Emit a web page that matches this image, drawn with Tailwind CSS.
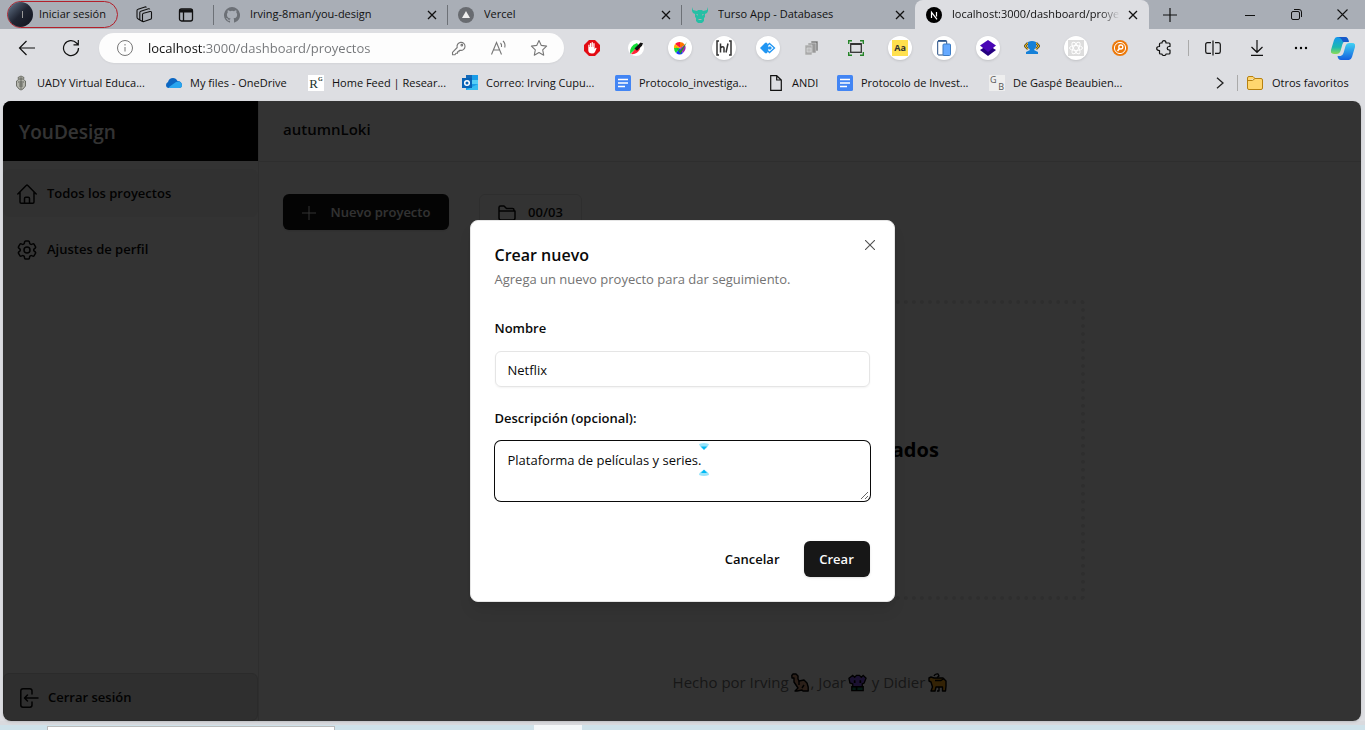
<!DOCTYPE html>
<html lang="es">
<head>
<meta charset="utf-8">
<meta name="viewport" content="width=device-width, initial-scale=1">
<title>YouDesign - Proyectos</title>
<script src="https://cdn.jsdelivr.net/npm/@tailwindcss/browser@4"></script>
</head>
<body class="flex h-screen flex-col overflow-hidden bg-[#dddee2] font-['Open_Sans','Noto_Sans',sans-serif] text-[11px] text-[#111]">

<!-- Tab strip -->
<header class="flex h-[29px] shrink-0 items-center bg-[#a9aeb6]">
  <button class="ml-[7px] flex h-[27px] w-[111px] shrink-0 items-center gap-[6px] rounded-full border border-[#b3202b] whitespace-nowrap">
    <span class="flex size-[25px] shrink-0 items-center justify-center rounded-full bg-linear-to-br from-[#6c7d92] via-[#202532] to-[#10131d]"><span class="ml-1 h-[7px] w-px bg-[#999]"></span></span>Iniciar sesión
  </button>
  <button class="ml-[17px] shrink-0" aria-label="Espacios de trabajo"><svg width="18" height="18" viewBox="0 0 18 18" fill="none" stroke="#111" stroke-width="1.100" stroke-linejoin="round"><path d="M8.500 7.200 15 5.500q1.500-.3 1.500 1V12q0 1-1 1.300l-6.500 2.200q-1.500.4-1.500-1V8.500q0-1 1-1.300M4.800 13.500V6.500q0-1 1-1.300L13.500 2.800q1-.2 1.300.6M2 11.500V4.500q0-1 1-1.300L10 .9q1-.2 1.400.5M2 11q0 1.500 1.200 2l4.300 2.500"/></svg></button>
  <button class="ml-6 shrink-0" aria-label="Pestañas verticales"><svg width="18" height="18" viewBox="0 0 18 18" fill="none" stroke="#111" stroke-width="1.300"><rect x="2.500" y="3" width="13" height="12" rx="2"/><path d="M2.500 5h13" stroke-width="3"/><path d="M6.500 6v9"/></svg></button>
  <nav class="ml-[18px] flex min-w-0 flex-1 self-stretch" aria-label="Pestañas">
    <div class="flex max-w-[234px] flex-1 items-center">
      <span class="h-5 w-px bg-[#6d7177]"></span>
      <svg class="ml-[10px] shrink-0" width="16" height="16" viewBox="0 0 16 16" fill="#6c7076"><path d="M8 0a8 8 0 0 0-2.530 15.590c.4.070.55-.17.55-.38v-1.490c-2.010.37-2.530-.49-2.690-.94-.09-.23-.48-.94-.82-1.130-.28-.15-.68-.52-.01-.53.630-.01 1.080.58 1.230.82.720 1.210 1.870.87 2.330.66.070-.52.280-.87.510-1.070-1.780-.2-3.640-.89-3.640-3.950 0-.87.310-1.590.82-2.150-.08-.2-.36-1.020.08-2.120 0 0 .67-.21 2.200.82a7.400 7.400 0 0 1 4 0c1.530-1.040 2.200-.82 2.200-.82.440 1.100.160 1.920.08 2.120.510.560.82 1.270.82 2.150 0 3.070-1.870 3.750-3.650 3.950.290.250.540.730.540 1.480v2.200c0 .21.150.46.55.38A8 8 0 0 0 8 0"/></svg>
      <a href="#" class="ml-[10px] flex-1 truncate">Irving-8man/you-design</a>
      <button class="mr-[10px]" aria-label="Cerrar pestaña"><svg width="10" height="10" viewBox="0 0 10 10" stroke="#111" stroke-width="1.300"><path d="M1 1l8 8M9 1 1 9"/></svg></button>
    </div>
    <div class="flex max-w-[234px] flex-1 items-center">
      <span class="h-5 w-px bg-[#6d7177]"></span>
      <svg class="ml-[10px] shrink-0" width="16" height="16" viewBox="0 0 16 16"><circle cx="8" cy="8" r="8" fill="#686b70"/><path d="M8 4l4 7H4z" fill="#eee"/></svg>
      <a href="#" class="ml-[10px] flex-1 truncate">Vercel</a>
      <button class="mr-[10px]" aria-label="Cerrar pestaña"><svg width="10" height="10" viewBox="0 0 10 10" stroke="#111" stroke-width="1.300"><path d="M1 1l8 8M9 1 1 9"/></svg></button>
    </div>
    <div class="flex max-w-[234px] flex-1 items-center">
      <span class="h-5 w-px bg-[#6d7177]"></span>
      <svg class="ml-[10px] shrink-0" width="16" height="16" viewBox="0 0 16 16" fill="#24bfa5"><path d="M0 0l1 3 4 1 1-1h4l1 1 4-1 1-3v4l-1 2-2 1v3l-1 1v3l-2 2H6l-2-2v-3l-1-1V7L1 6 0 4z"/><path d="M4.500 7.500l1.500.5M11.500 7.500 10 8M6.500 12.500h3" stroke="#a9aeb6"/></svg>
      <a href="#" class="ml-[10px] flex-1 truncate">Turso App - Databases</a>
      <button class="mr-[10px]" aria-label="Cerrar pestaña"><svg width="10" height="10" viewBox="0 0 10 10" stroke="#111" stroke-width="1.300"><path d="M1 1l8 8M9 1 1 9"/></svg></button>
    </div>
    <div class="flex max-w-[234px] flex-1 items-center rounded-t-lg bg-[#dddee2]">
      <svg class="ml-[11px] shrink-0" width="16" height="16" viewBox="0 0 16 16"><circle cx="8" cy="8" r="8" fill="#000"/><path d="M5.500 11V5.300l5.500 7M10.500 5v4.500" fill="none" stroke="#fff" stroke-width="1.200"/></svg>
      <a href="#" class="ml-[10px] w-[168px] whitespace-nowrap mask-r-from-88%">localhost:3000/dashboard/proye</a>
      <button class="mr-[11px] ml-[8px]" aria-label="Cerrar pestaña"><svg width="10" height="10" viewBox="0 0 10 10" stroke="#111" stroke-width="1.300"><path d="M1 1l8 8M9 1 1 9"/></svg></button>
    </div>
    <button class="ml-[14px]" aria-label="Nueva pestaña"><svg width="14" height="14" viewBox="0 0 14 14" stroke="#111" stroke-width="1.200"><path d="M7 0v14M0 7h14"/></svg></button>
  </nav>
  <button class="flex w-[46px] justify-center" aria-label="Minimizar"><svg width="10" height="10" viewBox="0 0 10 10" stroke="#111"><path d="M0 5.500h10"/></svg></button>
  <button class="flex w-[46px] justify-center" aria-label="Restaurar"><svg width="11" height="11" viewBox="0 0 11 11" fill="none" stroke="#111"><rect x=".5" y="2.500" width="8" height="8" rx="1.500"/><path d="M3 .5h5q2.500 0 2.500 2.500v5"/></svg></button>
  <button class="flex w-[46px] justify-center" aria-label="Cerrar ventana"><svg width="11" height="11" viewBox="0 0 11 11" stroke="#111" stroke-width="1.100"><path d="M.5.5l10 10M10.500.5l-10 10"/></svg></button>
</header>

<!-- Address bar -->
<div class="flex h-[38px] shrink-0 items-center pl-[5px]">
  <button class="flex w-11 justify-center" aria-label="Atrás"><svg width="18" height="16" viewBox="0 0 18 16" fill="none" stroke="#111" stroke-width="1.200"><path d="M17 8H1.500M8.500 1l-7 7 7 7"/></svg></button>
  <button class="flex w-11 justify-center" aria-label="Actualizar"><svg width="18" height="18" viewBox="0 0 18 18" fill="none" stroke="#111" stroke-width="1.200"><path d="M16.500 9A7.500 7.500 0 1 1 14.500 4L16 5.500M16.300 1v4.800h-4.800"/></svg></button>
  <div class="mx-[6px] flex h-[30px] min-w-0 flex-1 items-center rounded-full bg-[#fdfdfd] pr-[16px] pl-[17px] shadow-xs">
    <svg class="shrink-0" width="18" height="18" viewBox="0 0 18 18" fill="none" stroke="#777"><circle cx="9" cy="9" r="7.500"/><path d="M9 8v4.500M9 5v1.500"/></svg>
    <label for="url" class="sr-only">Dirección</label>
    <input id="url" type="text" value="localhost:3000/dashboard/proyectos" class="ml-[14px] h-6 min-w-0 flex-1 bg-linear-to-r from-[#111] from-[56px] to-[#737578] to-[56px] bg-clip-text text-[13px] text-transparent outline-none">
    <svg class="mr-6 shrink-0" width="15" height="15" viewBox="0 0 15 15" fill="none" stroke="#777" stroke-width="1.100" stroke-linejoin="round"><path d="M6.200 6.500A4 4 0 1 1 9 9.200L8 9.500v1.300H6.500v1.500H5l-1 1.500H1.500v-2.500z"/><circle cx="10.800" cy="4.200" r=".8"/></svg>
    <svg class="mr-[22px] shrink-0" width="18" height="16" viewBox="0 0 18 16" fill="none" stroke="#777" stroke-width="1.100"><path d="M1.500 14.500 6.500 2.500l5 12M3.500 10h6M10.500 3q1.500 1.500 1 4M13 1q2.800 2.500 1.700 6.500"/></svg>
    <svg class="shrink-0" width="18" height="18" viewBox="0 0 18 18" fill="none" stroke="#777" stroke-width="1.100" stroke-linejoin="round"><path d="M9 1.500l2.300 4.900 5.300.7-3.900 3.700 1 5.400L9 13.600l-4.700 2.600 1-5.400L1.400 7.100l5.300-.7z"/></svg>
  </div>
  <nav class="flex shrink-0 items-center" aria-label="Extensiones">
    <button class="flex w-11 justify-center" aria-label="Bloqueador"><svg width="16" height="16" viewBox="0 0 16 16"><path d="M5 0h6l5 5v6l-5 5H5l-5-5V5z" fill="#e30b13"/><path d="M4.300 8V5q.7-.8 1.200 0v2h.4V3.300q.7-.8 1.300 0V7h.4V2.500q.7-.8 1.300 0V7h.4V3.500q.7-.8 1.300 0V9l1-1.300q1-.2 1 .5L11 12q-.8 1.500-3 1.500-3.500 0-3.700-3z" fill="#fff"/></svg></button>
    <button class="flex w-11 justify-center" aria-label="Cuentagotas"><svg width="16" height="16" viewBox="0 0 16 16"><circle cx="8" cy="8" r="8" fill="#fff"/><path d="M2 14Q1 6 9 3l2 3z" fill="#16df38"/><path d="M3 14l5-6 3-3 1 4q-3 6-9 5z" fill="#ff2436"/><path d="M6.500 8.500l4-4 2-2 2.500.8-1 2.500-5 5z" fill="#111"/></svg></button>
    <button class="mx-[10px] flex size-6 items-center justify-center rounded-full bg-white shadow" aria-label="Selector de color"><svg width="14" height="14" viewBox="0 0 14 14"><path d="M7 7V1a6 6 0 0 1 5 3z" fill="#ff7300"/><path d="M7 7V1a6 6 0 0 0-5 2z" fill="#ff173b"/><path d="M7 7 2 3a6 6 0 0 0-1 4z" fill="#ffb000"/><path d="M7 7H1q0 3 2 5z" fill="#18df38"/><path d="M7 7l-4 5q4 3 7 0z" fill="#1538ff"/><path d="M7 7l5-3q2 4-2 8z" fill="#a029b5"/><path d="M3 6l4 4 7-9-6.500 12z" fill="#249b21"/></svg></button>
    <button class="mx-[10px] flex size-6 items-center justify-center rounded-full bg-white shadow" aria-label="Hypothesis"><svg width="16" height="16" viewBox="0 0 16 16" fill="none" stroke="#333" stroke-width="1.500"><path d="M3 1H1v14h2M13 1h2v14h-2M4.500 3.500v9M4.500 8q3-2.500 3.500 0v4.500M12 3.500l-2 9"/></svg></button>
    <button class="mx-[10px] flex size-6 items-center justify-center rounded-full bg-white shadow" aria-label="Navegación"><svg width="16" height="12" viewBox="0 0 16 12" fill="#2196f3"><path d="M0 6l5-5q1-.8 2 0l1 1.500L5 6l3 3.500L7 11q-1 .8-2 0z"/><path d="M9.500 1.500 14.500 6l-5 4.500L5 6z" fill="#fff" stroke="#2196f3" stroke-width="1.300"/><path d="M3 6l4-3 1.500 1.500v3L7 9zM10 4l2 2-2 2-2-2z"/></svg></button>
    <button class="flex w-11 justify-center" aria-label="Copias"><svg width="16" height="16" viewBox="0 0 16 16" stroke="#dedfe1" stroke-width=".6"><path d="M7 1h7v10H7z" fill="#777"/><path d="M4 3h8v10H4z" fill="#999"/><path d="M1 5h7v10H1z" fill="#aaa"/><path d="M3 8h4v4H3z" fill="#bbb"/></svg></button>
    <button class="flex w-11 justify-center" aria-label="Captura"><svg width="16" height="16" viewBox="0 0 16 16" fill="none"><path d="M.7 4V.7H4M12 .7h3.300V4M15.300 12v3.300H12M4 15.300H.7V12" stroke="#268529" stroke-width="1.400"/><rect x="2.700" y="3.700" width="10.600" height="8.600" stroke="#333" stroke-width="1.300"/><path d="M3 4h10" stroke="#333" stroke-width="2"/></svg></button>
    <button class="mx-[10px] flex size-6 items-center justify-center rounded-full bg-white shadow" aria-label="Tipografía"><span class="flex size-4 items-center justify-center bg-[#ffe04e] text-[9px] font-bold text-[#333]">Aa</span></button>
    <button class="mx-[10px] flex size-6 items-center justify-center rounded-full bg-white shadow" aria-label="Vista móvil"><svg width="14" height="16" viewBox="0 0 14 16"><rect x=".7" y=".7" width="9" height="14.300" rx="1" fill="#fff" stroke="#234c83"/><path d="M1 1h8.500" stroke="#234c83" stroke-width="1.500"/><rect x="6" y="4" width="7.500" height="11.500" rx="1" fill="#65a9ff" stroke="#3c7bc3"/></svg></button>
    <button class="mx-[10px] flex size-6 items-center justify-center rounded-full bg-white shadow" aria-label="Capas"><svg width="16" height="16" viewBox="0 0 16 16"><path d="M0 10l8-5 8 5-8 6z" fill="#250080"/><path d="M0 5.500 8 0l8 5.500L8 12z" fill="#4906b6"/></svg></button>
    <button class="flex w-11 justify-center" aria-label="Usuario"><svg width="16" height="14" viewBox="0 0 16 14"><path d="M4 2 1 5l3 3M12 2l3 3-3 3" stroke="#655b35" fill="none" stroke-width="2.500"/><path d="M4 2 1 5l3 3M12 2l3 3-3 3" stroke="#f0b70a" fill="none"/><path d="M4 1q4-2 8 0v5l-2 3 4 2v2H2v-2l4-2-2-3z" fill="#1580d8"/></svg></button>
    <button class="mx-[10px] flex size-6 items-center justify-center rounded-full bg-white shadow" aria-label="React"><svg width="16" height="16" viewBox="0 0 16 16" fill="none" stroke="#fff"><path d="M0 0h16v16H0z" fill="#ddd" stroke="none"/><ellipse cx="8" cy="8" rx="6.500" ry="2.500"/><ellipse cx="8" cy="8" rx="6.500" ry="2.500" transform="rotate(60 8 8)"/><ellipse cx="8" cy="8" rx="6.500" ry="2.500" transform="rotate(120 8 8)"/></svg></button>
    <button class="flex w-11 justify-center" aria-label="Buscar"><svg width="16" height="16" viewBox="0 0 16 16" fill="none"><circle cx="8" cy="8" r="8" fill="#ec790b"/><g stroke="#fff"><circle cx="8" cy="8" r="5.600"/><circle cx="8.800" cy="7" r="2" stroke-width="1.300"/><path d="M7.500 8.500l-2 2.500" stroke-width="1.500"/></g></svg></button>
    <button class="flex w-11 justify-center" aria-label="Extensiones"><svg width="16" height="16" viewBox="0 0 16 16" fill="none" stroke="#111" stroke-width="1.200" stroke-linejoin="round"><path d="M4.500 3H6Q6 .7 8 .7T10 3h3q1 0 1 1v2.500h-1q-1.800.2-1.800 1.800t1.800 1.700h1V13q0 1-1 1h-3q0 1.500-2 1.500T6 14H4.500q-1 0-1-1v-2.500Q.7 10.500.7 8.500t2.800-2V4q0-1 1-1z"/></svg></button>
    <span class="mx-[2px] h-4 w-px bg-[#aaa]"></span>
    <button class="flex w-[43px] justify-center" aria-label="Pantalla dividida"><svg width="16" height="16" viewBox="0 0 16 16" fill="none" stroke="#111" stroke-width="1.200"><path d="M6 2.600H2.500Q.7 2.600.7 4.500v7q0 1.900 1.800 1.900H6M10 2.600h3.500q1.800 0 1.800 1.900v7q0 1.900-1.800 1.900H10M8 .5v15"/></svg></button>
    <button class="flex w-[46px] justify-center" aria-label="Descargas"><svg width="14" height="16" viewBox="0 0 14 16" fill="none" stroke="#111" stroke-width="1.200"><path d="M7 0v12M1.500 7 7 12.300 12.500 7M1 15.300h12"/></svg></button>
    <button class="flex w-[42px] justify-center" aria-label="Más"><svg width="14" height="4" viewBox="0 0 14 4"><circle cx="2" cy="2" r="1.200"/><circle cx="7" cy="2" r="1.200"/><circle cx="12" cy="2" r="1.200"/></svg></button>
    <button class="flex w-[43px] justify-center pr-[2px]" aria-label="Copilot"><svg width="24" height="23" viewBox="0 0 24 23"><defs><linearGradient id="ca" x2="0" y2="1"><stop stop-color="#1697ef"/><stop offset=".6" stop-color="#1bb8b0"/><stop offset="1" stop-color="#8bdc57"/></linearGradient><linearGradient id="cb" x2="0" y2="1"><stop stop-color="#40d2f3"/><stop offset="1" stop-color="#1460df"/></linearGradient></defs><path d="M6 0h8q3 0 3.500 4h-3q-2 0-3 3l-2 7q-1 3-4 3H3q-4 0-3-4L3 3q1-3 3-3" fill="url(#ca)"/><path d="M18 23h-8q-3 0-3.500-4h3q2 0 3-3l2-7q1-3 4-3H21q4 0 3 4l-3 10q-1 3-3 3" fill="url(#cb)"/><path d="M6 0h8q3 0 4 5h-6Q10 0 6 0" fill="#1859c9"/></svg></button>
  </nav>
</div>

<!-- Bookmarks -->
<nav class="flex h-[34px] shrink-0 items-center gap-4 pr-[14px] pb-[2px] pl-[13px] whitespace-nowrap" aria-label="Favoritos">
  <a href="#" class="flex items-center gap-2"><svg width="16" height="16" viewBox="0 0 16 16" fill="#b4b5ac" stroke="#575950" stroke-width=".8"><path d="M8 1l3 1.500-.5 2L12.500 6v5l-2.500 3-2 1-2-1-2.500-3V6l2-1.500-.5-2z"/><path d="M6 4h4M8 2v12M5 7h6M6 11h4M6 9h4"/></svg><span class="w-[113px]">UADY Virtual Educa...</span></a>
  <a href="#" class="flex items-center gap-2"><svg width="16" height="12" viewBox="0 0 16 12"><path d="M2 5Q3 1 7 1q3 0 4.500 3 4 0 4.500 4 0 3-3 3H3Q0 11 0 8q0-2 2-3" fill="#0b66c2"/><path d="M3 10l7-5q5-2 6 3 0 3-3 3H3z" fill="#27a5ef"/></svg><span class="w-[102px]">My files - OneDrive</span></a>
  <a href="#" class="flex items-center gap-2"><span class="flex size-4 justify-center bg-white font-['Liberation_Serif',serif] text-[13px] leading-[18px] text-[#24332d]">R<sup class="top-0 text-[6px] leading-[8px] font-bold">G</sup></span><span class="w-[114px]">Home Feed | Resear...</span></a>
  <a href="#" class="flex items-center gap-2"><svg width="16" height="16" viewBox="0 0 16 16"><path d="M4 0h12v15H4z" fill="#1a9de8"/><path d="M4 0h6v5H4z" fill="#1369b8"/><path d="M10 5h6v4h-6z" fill="#55cff6"/><path d="M4 15l12-6v6z" fill="#36bdf1"/><path d="M0 3h10v10H0z" fill="#0863b6"/><circle cx="5" cy="8" r="2.300" fill="none" stroke="#fff" stroke-width="1.500"/></svg><span class="w-[113px]">Correo: Irving Cupu...</span></a>
  <a href="#" class="flex items-center gap-2"><svg width="16" height="16" viewBox="0 0 16 16"><rect width="16" height="16" rx="1.500" fill="#4285f4"/><path d="M3 4.500h10M3 8h10M3 11.500h7" stroke="#fff" stroke-width="1.500"/></svg><span class="w-[113px]">Protocolo_investiga...</span></a>
  <a href="#" class="flex items-center gap-2"><svg width="16" height="16" viewBox="0 0 16 16" fill="none" stroke="#111" stroke-width="1.200"><path d="M2.700.7h6L13.300 5v10.300H2.700zM8.700.7V5h4.600"/></svg><span class="w-[29px]">ANDI</span></a>
  <a href="#" class="flex items-center gap-2"><svg width="16" height="16" viewBox="0 0 16 16"><rect width="16" height="16" rx="1.500" fill="#4285f4"/><path d="M3 4.500h10M3 8h10M3 11.500h7" stroke="#fff" stroke-width="1.500"/></svg><span class="w-[112px]">Protocolo de Invest...</span></a>
  <a href="#" class="flex items-center gap-2"><span class="flex size-4 justify-between bg-[#eee] px-px text-[9px] leading-[9px] text-[#555]"><span>G</span><span class="self-end">B</span></span><span>De Gaspé Beaubien...</span></a>
  <button class="ml-auto" aria-label="Más favoritos"><svg width="8" height="12" viewBox="0 0 8 12" fill="none" stroke="#222" stroke-width="1.300"><path d="M1 .7 7 6l-6 5.300"/></svg></button>
  <a href="#" class="-ml-[3px] flex items-center gap-2"><span class="h-4 w-px bg-[#aaa]"></span><svg width="18" height="16" viewBox="0 0 18 16" fill="#ffd66e" stroke="#b78110"><path d="M1.500 3q0-1.500 1.500-1.500h4L9 3.500h6q1.500 0 1.500 1.500v8q0 1.500-1.500 1.500H3q-1.500 0-1.500-1.500zM1.500 5.500h5l2.500-2"/></svg><span class="w-[79px]">Otros favoritos</span></a>
</nav>

<!-- Application viewport -->
<div class="relative mr-1 ml-[3px] flex min-h-0 flex-1 overflow-hidden rounded-lg bg-white text-[13px] shadow">
  <aside class="flex w-64 shrink-0 flex-col border-r border-neutral-200 font-semibold text-neutral-950">
    <h1 class="flex h-[60px] items-center bg-black px-4 pt-[2px] text-[19px] text-white">YouDesign</h1>
    <nav class="mt-2 flex flex-1 flex-col gap-2">
      <a href="#" class="flex h-12 items-center gap-[10px] rounded-md bg-neutral-100 px-[14px] pt-px"><svg width="20" height="20" viewBox="0 0 20 20" fill="none" stroke="currentColor" stroke-width="1.500" stroke-linecap="round" stroke-linejoin="round"><path d="M.8 10 9.200 1.500q.8-.7 1.600 0L19.200 10M3 8v10q0 1.200 1.200 1.200h11.600q1.200 0 1.200-1.200V8M7.500 19v-4.500q0-1.200 1.200-1.200h2.600q1.200 0 1.200 1.200V19"/></svg>Todos los proyectos</a>
      <a href="#" class="flex h-12 items-center gap-[10px] rounded-md px-[14px] pt-px"><svg width="20" height="20" viewBox="2 2 20 20" fill="none" stroke="currentColor" stroke-width="1.500" stroke-linecap="round" stroke-linejoin="round"><path d="M9.594 3.940c.09-.542.560-.940 1.110-.940h2.593c.55 0 1.020.398 1.110.940l.213 1.281c.063.374.313.686.645.870.074.040.147.083.220.127.325.196.720.257 1.075.124l1.217-.456a1.125 1.125 0 0 1 1.370.490l1.296 2.247a1.125 1.125 0 0 1-.26 1.431l-1.003.827c-.293.241-.438.613-.430.992a7.723 7.723 0 0 1 0 .255c-.008.378.137.750.430.991l1.004.827c.424.350.534.955.260 1.430l-1.298 2.247a1.125 1.125 0 0 1-1.369.491l-1.217-.456c-.355-.133-.750-.072-1.076.124a6.470 6.470 0 0 1-.220.128c-.331.183-.581.495-.644.869l-.213 1.281c-.090.543-.560.940-1.110.940h-2.594c-.550 0-1.019-.398-1.110-.940l-.213-1.281c-.062-.374-.312-.686-.644-.870a6.520 6.520 0 0 1-.220-.127c-.325-.196-.720-.257-1.076-.124l-1.217.456a1.125 1.125 0 0 1-1.369-.490l-1.297-2.247a1.125 1.125 0 0 1 .260-1.431l1.004-.827c.292-.240.437-.613.430-.991a6.932 6.932 0 0 1 0-.255c.007-.380-.138-.751-.430-.992l-1.004-.827a1.125 1.125 0 0 1-.260-1.430l1.297-2.247a1.125 1.125 0 0 1 1.370-.491l1.216.456c.356.133.751.072 1.076-.124.072-.044.146-.086.220-.128.332-.183.582-.495.644-.869z"/><circle cx="12" cy="12" r="3"/></svg>Ajustes de perfil</a>
    </nav>
    <button class="flex h-12 items-center gap-[9px] rounded-md border border-neutral-300 bg-[#e8e8e8] px-4 pt-px"><svg width="19" height="20" viewBox="0 0 19 20" fill="none" stroke="currentColor" stroke-width="1.500" stroke-linecap="round" stroke-linejoin="round"><path d="M12 6V3q0-2.200-2.200-2.200H3Q.8.800.8 3v14q0 2.200 2.200 2.200h6.800Q12 19.200 12 17v-3M7.500 7l-3 3 3 3M5 10h13"/></svg>Cerrar sesión</button>
  </aside>

  <main class="flex min-w-0 flex-1 flex-col">
    <div class="flex h-[61px] items-center border-b border-neutral-200 px-6 pb-1 text-[15px] font-semibold">autumnLoki</div>
    <div class="flex flex-1 flex-col px-6 pt-8">
      <div class="flex items-center gap-[30px] font-semibold">
        <button class="flex h-9 w-[166px] items-center justify-center gap-[15px] rounded-md bg-neutral-900 pt-px text-neutral-50 shadow"><svg width="14" height="14" viewBox="0 0 14 14" stroke="currentColor"><path d="M7 0v14M0 7h14"/></svg>Nuevo proyecto</button>
        <div class="flex h-9 w-[103px] items-center justify-center gap-3 rounded-md border border-neutral-200 pt-px"><svg width="18" height="16" viewBox="0 0 18 16" fill="none" stroke="#0a0a0a" stroke-width="1.500" stroke-linejoin="round"><path d="M1 6V2.500Q1 1 2.500 1H6l2.500 2.500h6Q16 3.500 16 5v1M1 6h16v7q0 2-2 2H3q-2 0-2-2z"/></svg>00/03</div>
      </div>
      <section class="mx-auto mt-[70px] flex h-[300px] w-full max-w-[550px] items-center justify-center rounded-sm border-4 border-dotted border-neutral-200">
        <h2 class="text-[20px] font-bold text-black">No hay proyectos creados</h2>
      </section>
      <footer class="mt-auto flex h-[77px] items-center justify-center text-[15px] font-normal whitespace-pre text-neutral-500">Hecho por Irving<svg class="mr-[2px] ml-[2px]" width="18" height="19" viewBox="0 0 18 19" fill="#d49c79" stroke="#000" stroke-width="1.400" stroke-linejoin="round"><path d="M.8 2.500 2 1h3l2 2v3l1 2 5-1 3 3 1.200 4v4H12l-1-1-5 1H4l3-3-2-3-2-3V5H1z"/><path d="M8 8v4M13 12l-2 3" fill="none"/></svg>, Joar<svg class="mr-px ml-[2px]" width="19" height="19" viewBox="0 0 20 19" stroke="#000" stroke-width="1.400"><path d="M5 2l2 2 2-2h3l2 2 2-2 3 3-2 5-2 1v3H5v-3l-3-1-1-5z" fill="#8458ed"/><path d="M4 14h12v4H4z" fill="#178264"/><path d="M7 7v3M13 7v3M9 14v4" stroke-width="1.800"/></svg> y Didier<svg class="ml-[3px]" width="19" height="19" viewBox="0 0 19 19" fill="#ffac19" stroke="#000" stroke-width="1.400" stroke-linejoin="round"><path d="M1 5l2-1 3 1h9l3 3v5l-.5 5h-3v-4H8l-1 4H3l1.500-4L3 9 1 8z"/><path d="M6 3q1-2.500 4-2l1 2-2 1.500M7 7.500h6l3-2M11 14v4H9" fill="none"/></svg></footer>
    </div>
  </main>

  <div class="absolute inset-0 flex items-center justify-center bg-black/80">
    <form role="dialog" aria-labelledby="dialog-title" class="relative w-full max-w-[425px] rounded-lg border border-neutral-200 bg-white px-6 pt-[22px] pb-6 text-neutral-950 shadow-lg">
      <h2 id="dialog-title" class="text-[16px] leading-6 font-semibold">Crear nuevo</h2>
      <p class="text-[13px] leading-6 text-neutral-500">Agrega un nuevo proyecto para dar seguimiento.</p>
      <button type="button" class="absolute top-[19px] right-[19px] text-neutral-600" aria-label="Cerrar"><svg width="10" height="10" viewBox="0 0 10 10" stroke="currentColor" stroke-width="1.100"><path d="M0 0l10 10M10 0 0 10"/></svg></button>
      <label for="nombre" class="mt-[27px] block leading-5 font-semibold">Nombre</label>
      <input id="nombre" type="text" value="Netflix" class="mt-[13px] block h-9 w-full rounded-md border border-neutral-200 px-3 pt-px shadow-xs">
      <label for="descripcion" class="mt-[21px] block leading-5 font-semibold">Descripción (opcional):</label>
      <div class="relative mt-[13px]">
        <textarea id="descripcion" spellcheck="false" class="block h-[60px] w-full rounded-md border border-transparent px-3 py-2 leading-5 ring-1 ring-neutral-950 outline-none">Plataforma de películas y series.</textarea>
        <svg class="pointer-events-none absolute top-px left-[204px]" width="10" height="34" viewBox="0 0 10 34" aria-hidden="true"><path d="M0 2.500Q1 1 5 1t5 1.500Q8.500 6 5 7.500 1.500 6 0 2.500M0 33q5 2 10 0 0-3-5-5-5 2-5 5" fill="#98e4fb"/><path d="M2 4.500h6L5 8zM2 31h6l-3-3.500z" fill="#00b9f5"/></svg>
      </div>
      <div class="mt-10 flex justify-end gap-2 font-semibold">
        <button type="button" class="h-9 px-4 pt-px">Cancelar</button>
        <button type="submit" class="h-9 w-[66px] rounded-md bg-neutral-900 pt-px text-neutral-50 shadow">Crear</button>
      </div>
    </form>
  </div>
</div>

<!-- Desktop edge below the browser -->
<div class="flex h-[9px] shrink-0 items-end border-t-4 border-[#d9dade] bg-[#cfe2ea]">
  <div class="ml-[47px] h-1 w-[288px] border border-b-0 border-[#bbb] bg-white"></div>
  <div class="ml-[199px] h-[5px] w-12 bg-[#f4f8fa]"></div>
</div>
</body>
</html>
